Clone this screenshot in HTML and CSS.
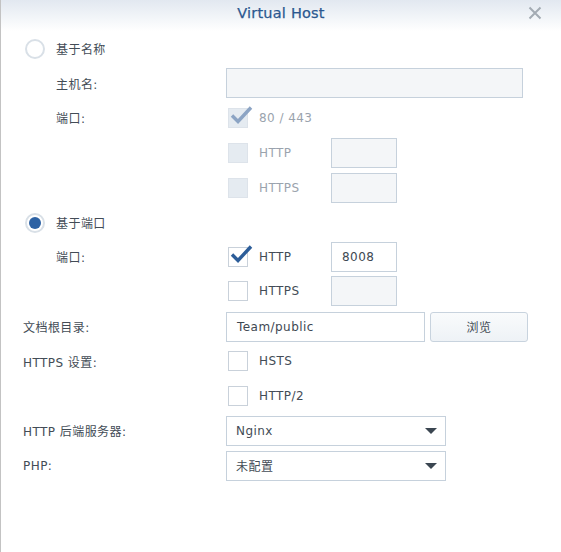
FILE: index.html
```html
<!DOCTYPE html>
<html lang="zh">
<head>
<meta charset="utf-8">
<title>Virtual Host</title>
<link rel="stylesheet" href="styles.css">
</head>
<body>
<div class="dialog">
  <header class="head">
    <h1 class="title">Virtual Host</h1>
    <span class="close" aria-label="close">
      <svg width="14" height="14" viewBox="0 0 14 14"><path d="M1.5 1.5L12.5 12.5M12.5 1.5L1.5 12.5" stroke="#a3abb3" stroke-width="2" fill="none"/></svg>
    </span>
  </header>
  <div class="form">
    <div class="row r35 wide">
      <span class="radio"></span><span class="txt">基于名称</span>
    </div>
    <div class="row r34">
      <span class="lbl sub">主机名:</span>
      <span class="ctl"><span class="input dis w297"></span></span>
    </div>
    <div class="row r35">
      <span class="lbl sub">端口:</span>
      <span class="ctl"><span class="cb dis on"><svg viewBox="0 0 24 24" width="24" height="24"><path d="M3 11.5L9 17.5L22 3.5" stroke="#8ca4c4" stroke-width="3.4" fill="none"/></svg></span><span class="ctxt dim">80 / 443</span></span>
    </div>
    <div class="row r35">
      <span class="lbl"></span>
      <span class="ctl"><span class="cb dis"></span><span class="ctxt dim port-l">HTTP</span><span class="input dis w66"></span></span>
    </div>
    <div class="row r35">
      <span class="lbl"></span>
      <span class="ctl"><span class="cb dis"></span><span class="ctxt dim port-l">HTTPS</span><span class="input dis w66"></span></span>
    </div>
    <div class="row r35 wide">
      <span class="radio checked"></span><span class="txt">基于端口</span>
    </div>
    <div class="row r33">
      <span class="lbl sub">端口:</span>
      <span class="ctl"><span class="cb on"><svg viewBox="0 0 24 24" width="24" height="24"><path d="M3 11.5L9 17.5L22 3.5" stroke="#2c5d99" stroke-width="3.4" fill="none"/></svg></span><span class="ctxt port-l">HTTP</span><span class="input w66 val">8008</span></span>
    </div>
    <div class="row r36">
      <span class="lbl"></span>
      <span class="ctl"><span class="cb"></span><span class="ctxt port-l">HTTPS</span><span class="input dis w66"></span></span>
    </div>
    <div class="row r35">
      <span class="lbl main">文档根目录:</span>
      <span class="ctl"><span class="input w198 val">Team/public</span><span class="btn">浏览</span></span>
    </div>
    <div class="row r34">
      <span class="lbl main">HTTPS 设置:</span>
      <span class="ctl"><span class="cb"></span><span class="ctxt">HSTS</span></span>
    </div>
    <div class="row r35">
      <span class="lbl"></span>
      <span class="ctl"><span class="cb"></span><span class="ctxt">HTTP/2</span></span>
    </div>
    <div class="row r35">
      <span class="lbl main">HTTP 后端服务器:</span>
      <span class="ctl"><span class="select">Nginx<span class="caret"></span></span></span>
    </div>
    <div class="row r35">
      <span class="lbl main">PHP:</span>
      <span class="ctl"><span class="select">未配置<span class="caret"></span></span></span>
    </div>
  </div>
</div>
</body>
</html>
```
FILE: styles.css
```css
html, body {
  margin: 0;
  padding: 0;
  background: #fff;
}
body {
  font-family: "DejaVu Sans", "Noto Sans CJK SC", sans-serif;
  font-size: 12px;
  letter-spacing: 0.45px;
  color: #434c56;
}
.dialog {
  width: 561px;
  height: 552px;
  box-sizing: border-box;
  border-left: 1px solid #c3c3c3;
  background: #fff;
}
.head {
  height: 31px;
  display: flex;
  align-items: center;
  justify-content: center;
  position: relative;
  background: linear-gradient(#e2e8f0, #f3f6f9 60%, #ffffff);
  padding-bottom: 5px;
  box-sizing: border-box;
}
.title {
  margin: 0;
  font-size: 14.5px;
  font-weight: normal;
  color: #2b5890;
  letter-spacing: 0.2px;
  -webkit-text-stroke: 0.25px #2b5890;
}
.close {
  position: absolute;
  right: 19px;
  top: 6px;
  width: 14px;
  height: 14px;
  display: flex;
}
.form {
  display: flex;
  flex-direction: column;
}
.row {
  display: flex;
  align-items: center;
}
.r33 { height: 33px; }
.r34 { height: 34px; }
.r35 { height: 35px; }
.r36 { height: 36px; }
.wide { padding-left: 24px; }
.radio {
  width: 16px;
  height: 16px;
  border: 2px solid #d9e0e7;
  border-radius: 50%;
  background: #fff;
  display: flex;
  align-items: center;
  justify-content: center;
  margin-right: 11px;
}
.radio.checked::after {
  content: "";
  width: 12px;
  height: 12px;
  border-radius: 50%;
  background: #2d62a4;
}
.lbl {
  width: 225px;
  box-sizing: border-box;
  flex: none;
}
.lbl.sub { padding-left: 55px; }
.lbl.main { padding-left: 22px; }
.ctl {
  display: flex;
  align-items: center;
}
.cb {
  width: 18px;
  height: 18px;
  border: 1px solid #c9d1da;
  background: #fff;
  margin-left: 2px;
  margin-right: 11px;
  position: relative;
  flex: none;
}
.cb.dis {
  background: #e5ebf1;
  border-color: #dde3ea;
}
.cb svg {
  position: absolute;
  left: 0px;
  top: -5px;
}
.ctxt {
  white-space: nowrap;
}
.dim { color: #9aa3ad; }
.port-l { width: 72px; }
.input {
  height: 28px;
  border: 1px solid #c6d1dc;
  background: #fff;
  display: flex;
  align-items: center;
  padding-left: 10px;
  box-sizing: content-box;
}
.input.dis { background: #f4f6f8; }
.w297 { width: 285px; }
.w66 { width: 54px; }
.w198 { width: 187px; }
.val { color: #3e4852; }
.btn {
  width: 96px;
  height: 28px;
  margin-left: 5px;
  border: 1px solid #c8d3de;
  border-radius: 3px;
  background: linear-gradient(#f9fbfc, #eef2f6);
  display: flex;
  align-items: center;
  justify-content: center;
}
.select {
  width: 209px;
  height: 28px;
  border: 1px solid #c6d1dc;
  background: #fff;
  display: flex;
  align-items: center;
  justify-content: space-between;
  padding-left: 9px;
  box-sizing: content-box;
}
.caret {
  width: 0;
  height: 0;
  border-left: 6px solid transparent;
  border-right: 6px solid transparent;
  border-top: 6px solid #3b4651;
  margin-right: 8px;
}
```
